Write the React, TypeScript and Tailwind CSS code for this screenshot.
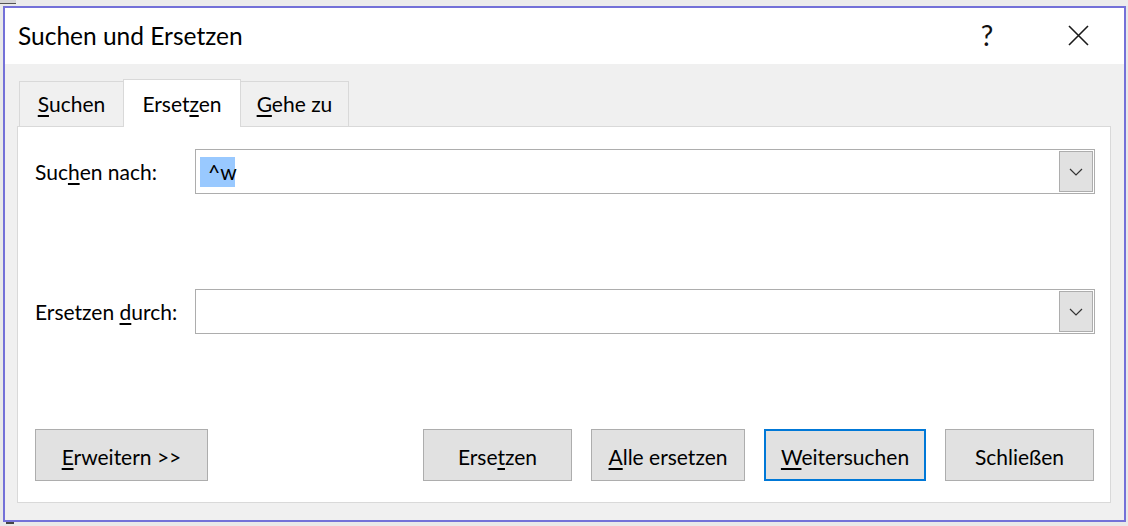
import React from "react";

const U = ({ c }: { c: string }) => (
  <span className="underline decoration-2 underline-offset-[3px]">{c}</span>
);

const Chevron = () => (
  <svg width="14" height="8" viewBox="0 0 14 8" fill="none">
    <path d="M1 1 L7 7 L13 1" stroke="#333" strokeWidth="1.2" />
  </svg>
);

const Combo = ({ children }: { children?: React.ReactNode }) => (
  <div className="flex-1 h-[45px] border border-[#adadad] bg-white flex items-center pl-[4px] pr-[1px]">
    <div className="flex-1 flex items-center">{children}</div>
    <div className="w-[34px] h-[41px] bg-[#e1e1e1] border border-[#adadad] flex items-center justify-center">
      <Chevron />
    </div>
  </div>
);

const Btn = ({
  w,
  children,
  focus,
  className = "",
}: {
  w: string;
  children: React.ReactNode;
  focus?: boolean;
  className?: string;
}) => (
  <div
    className={`${w} h-[52px] bg-[#e1e1e1] flex items-center justify-center pt-[2px] text-[21px] leading-[25px] text-black ${
      focus ? "border-2 border-[#0078d7]" : "border border-[#adadad]"
    } ${className}`}
  >
    {children}
  </div>
);

export default function App() {
  return (
    <div className="w-[1128px] h-[526px] bg-[#e9e9e9] overflow-hidden font-['Lato','Noto_Sans',sans-serif] text-black">
      <div className="h-[6px] flex">
        <div className="w-[16px] h-[4px] bg-[#d6d6d6] border-b border-[#555]" />
        <div className="flex-1 h-[6px] bg-[#ececec]" />
      </div>
      <div className="ml-[3px] w-[1123px] h-[516px] border-2 border-[#7471d8] bg-[#f0f0f0] flex flex-col">
        {/* title bar */}
        <div className="h-[56px] bg-white flex shrink-0">
          <div className="pl-[13px] pt-[13px] text-[24.5px] leading-[30px]">
            Suchen und Ersetzen
          </div>
          <div className="ml-auto flex pr-[26px] h-[56px] items-center">
            <div className="w-[40px] flex justify-center text-[28px] leading-[34px] -mt-[3px] text-[#111]">
              ?
            </div>
            <div className="ml-[51px] w-[40px] flex justify-center -mt-[2px]">
              <svg width="21" height="21" viewBox="0 0 21 21">
                <path d="M1 1 L20 20 M20 1 L1 20" stroke="#1a1a1a" strokeWidth="1.6" />
              </svg>
            </div>
          </div>
        </div>
        {/* tabs */}
        <div className="pt-[15px] pl-[14px] h-[62px] flex items-end shrink-0">
          <div className="w-[104px] h-[45px] border-l border-t border-[#d9d9d9] flex justify-center pt-[9px] text-[21px] leading-[25px]">
            <span>
              <U c="S" />uchen
            </span>
          </div>
          <div className="relative z-10 w-[118px] h-[48px] -mb-px bg-white border-l border-t border-r border-[#d9d9d9] flex justify-center pt-[11px] text-[21px] leading-[25px]">
            <span>
              Erset<U c="z" />en
            </span>
          </div>
          <div className="w-[108px] h-[45px] border-t border-r border-[#d9d9d9] flex justify-center pt-[9px] text-[21px] leading-[25px]">
            <span>
              <U c="G" />ehe zu
            </span>
          </div>
        </div>
        {/* panel */}
        <div className="ml-[12px] w-[1094px] h-[377px] bg-white border border-[#d9d9d9] flex flex-col pt-[22px] pr-[15px]">
          <div className="flex items-center">
            <div className="w-[177px] pl-[17px] text-[21px] leading-[25px]">
              Suc<U c="h" />en nach:
            </div>
            <Combo>
              <span className="inline-block w-[35px] h-[30px] bg-[#99c9ff] pl-[8px] text-[21px] leading-[30px] whitespace-nowrap">
                ^w
              </span>
            </Combo>
          </div>
          <div className="flex items-center mt-[95px]">
            <div className="w-[177px] pl-[17px] text-[21px] leading-[25px]">
              Ersetzen <U c="d" />urch:
            </div>
            <Combo />
          </div>
          <div className="flex mt-[95px] pl-[17px] pr-[1px]">
            <Btn w="w-[173px]">
              <span>
                <U c="E" />rweitern &gt;&gt;
              </span>
            </Btn>
            <Btn w="w-[149px]" className="ml-auto">
              <span>
                Erse<U c="t" />zen
              </span>
            </Btn>
            <Btn w="w-[154px]" className="ml-[19px]">
              <span>
                <U c="A" />lle ersetzen
              </span>
            </Btn>
            <Btn w="w-[162px]" className="ml-[19px]" focus>
              <span>
                <U c="W" />eitersuchen
              </span>
            </Btn>
            <Btn w="w-[149px]" className="ml-[19px]">
              <span>Schließen</span>
            </Btn>
          </div>
        </div>
      </div>
      <div className="flex">
        <div className="ml-[6px] w-[8px] h-[4px] border-t-2 border-[#444]" />
      </div>
    </div>
  );
}
